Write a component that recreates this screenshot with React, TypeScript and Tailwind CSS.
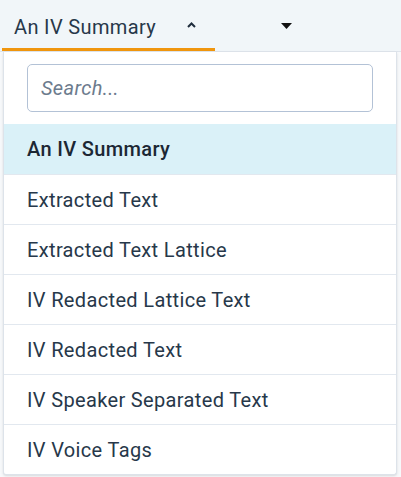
import React, { useState } from 'react';

const reports = [
    'An IV Summary',
    'Extracted Text',
    'Extracted Text Lattice',
    'IV Redacted Lattice Text',
    'IV Redacted Text',
    'IV Speaker Separated Text',
    'IV Voice Tags',
];

const App: React.FC = () => {
    const [selected, setSelected] = useState('An IV Summary');
    const [query, setQuery] = useState('');

    const filtered = reports.filter((r) => r.toLowerCase().includes(query.toLowerCase()));

    return (
        <div className="relative w-[401px] h-[477px] overflow-hidden bg-[#f7f9fb] font-['Roboto',sans-serif] tracking-[0.35px]">
            <div className="flex h-[52px] items-end border-b border-[#dfe5ec] bg-[#f1f6f9]">
                <button className="ml-[2px] flex h-[49px] w-[213px] items-center border-b-[3px] border-[#f0960e] pl-3 pt-[3px] text-[20px] tracking-[0.35px] text-[#27384a]">
                    <span>{selected}</span>
                    <svg className="ml-[31px] mb-[3px]" width="9" height="6" viewBox="0 0 9 6">
                        <path d="M1 5 L4.5 1.5 L8 5" fill="none" stroke="#1f2d3d" strokeWidth="2" />
                    </svg>
                </button>
                <div className="flex h-[49px] flex-1 items-center pl-[66px] pt-[2px]">
                    <svg className="mb-[4px]" width="11" height="6" viewBox="0 0 11 6">
                        <path d="M0 0 H11 L5.5 6 Z" fill="#111" />
                    </svg>
                </div>
            </div>

            <div className="absolute left-[3px] top-[52px] w-[394px] rounded-b-[3px] border border-t-0 border-[#dde3ea] bg-white shadow-sm">
                <div className="px-[23px] pt-[12px] pb-[12px]">
                    <input
                        value={query}
                        onChange={(e) => setQuery(e.target.value)}
                        placeholder="Search..."
                        className="h-[48px] w-full rounded-[5px] border border-[#b3c2d6] px-[13px] text-[20px] italic tracking-[0.35px] text-[#27384a] placeholder:text-[#6c7b8d] focus:outline-none"
                    />
                </div>
                <ul>
                    {filtered.map((r, i) => (
                        <li
                            key={r}
                            onClick={() => setSelected(r)}
                            className={`flex h-[50px] cursor-pointer items-center px-[23px] text-[20px] ${i > 0 ? 'border-t border-[#e2e8ef]' : ''} ${r === selected ? 'bg-[#daf1f8] font-medium text-[#1c2734]' : 'text-[#27384a]'}`}
                        >
                            {r}
                        </li>
                    ))}
                </ul>
            </div>
        </div>
    );
};

export default App;
